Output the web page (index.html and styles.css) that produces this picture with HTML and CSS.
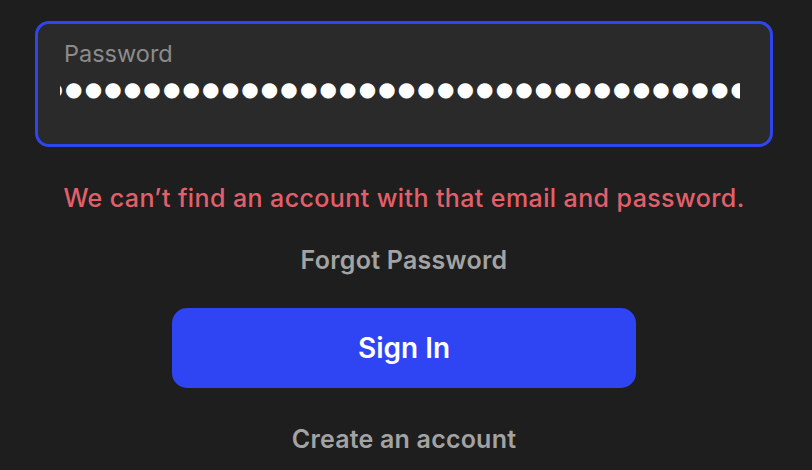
FILE: index.html
```html
<!DOCTYPE html>
<html lang="en">
<head>
<meta charset="utf-8">
<title>Sign In</title>
<link rel="stylesheet" href="styles.css">
</head>
<body>
<main class="form">
  <div class="field">
    <label class="field-label">Password</label>
    <div class="dots" aria-label="password">●●●●●●●●●●●●●●●●●●●●●●●●●●●●●●●●●●●●●●●●</div>
  </div>
  <p class="error">We can’t find an account with that email and password.</p>
  <a class="link forgot">Forgot Password</a>
  <button class="btn">Sign In</button>
  <a class="link create">Create an account</a>
</main>
</body>
</html>
```
FILE: styles.css
```css
html, body {
  margin: 0;
  padding: 0;
  background: #1e1e1e;
}
body {
  font-family: Inter, "Noto Sans", sans-serif;
  width: 812px;
  height: 470px;
  overflow: hidden;
}
.form {
  width: 738px;
  margin-left: 35px;
  padding-top: 21px;
  display: flex;
  flex-direction: column;
  align-items: center;
  text-align: center;
}
.field {
  box-sizing: border-box;
  width: 738px;
  height: 126px;
  border: 3px solid #2f45f0;
  border-radius: 14px;
  background: #2a2a2a;
  padding: 15.5px 30px 0 26px;
  text-align: left;
  display: flex;
  flex-direction: column;
}
.field-label {
  font-size: 23.5px;
  line-height: 28px;
  font-weight: 400;
  color: #8c8c8c;
}
.dots {
  margin-left: -4px;
  margin-top: 7px;
  overflow: hidden;
  white-space: nowrap;
  font-family: "DejaVu Sans", sans-serif;
  font-size: 20px;
  line-height: 28px;
  letter-spacing: 2.12px;
  text-indent: -14.5px;
  color: #ffffff;
}
.error {
  margin: 37px 0 0;
  font-size: 25px;
  line-height: 28px;
  font-weight: 500;
  letter-spacing: 0.4px;
  color: #e3606b;
}
.link {
  color: #a3a3a3;
  font-weight: 600;
  font-size: 25px;
  line-height: 28px;
}
.forgot {
  margin-top: 34px;
  letter-spacing: 0.25px;
}
.btn {
  margin-top: 34px;
  width: 464px;
  height: 80px;
  border: 0;
  border-radius: 15px;
  background: #2f44f2;
  color: #ffffff;
  font-family: inherit;
  font-size: 28px;
  font-weight: 600;
  padding: 0;
}
.create {
  margin-top: 37px;
  font-size: 25px;
  letter-spacing: 0.2px;
}
```
